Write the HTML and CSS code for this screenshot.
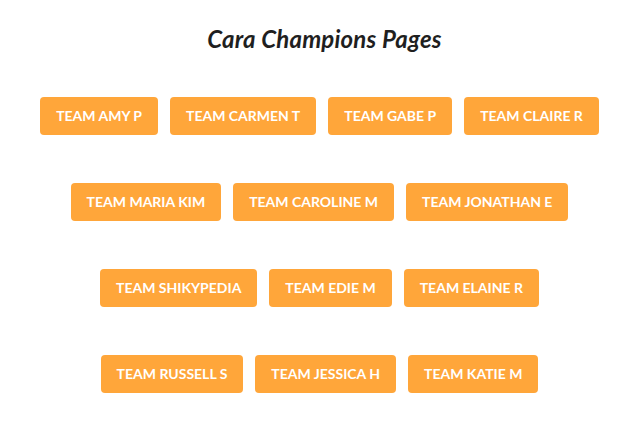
FILE: index.html
```html
<!DOCTYPE html>
<html lang="en">
<head>
  <meta charset="UTF-8" />
  <title>Cara Champions Pages</title>
  <link rel="stylesheet" href="styles.css">
</head>
<body>
  <div class="container">
    <h2>Cara Champions Pages</h2>
    <div class="team-row">
      <a class="team-btn" href="#">TEAM AMY P</a>
      <a class="team-btn" href="#">TEAM CARMEN T</a>
      <a class="team-btn" href="#">TEAM GABE P</a>
      <a class="team-btn" href="#">TEAM CLAIRE R</a>
    </div>
    <div class="team-row">
      <a class="team-btn" href="#">TEAM MARIA KIM</a>
      <a class="team-btn" href="#">TEAM CAROLINE M</a>
      <a class="team-btn" href="#">TEAM JONATHAN E</a>
    </div>
    <div class="team-row">
      <a class="team-btn" href="#">TEAM SHIKYPEDIA</a>
      <a class="team-btn" href="#">TEAM EDIE M</a>
      <a class="team-btn" href="#">TEAM ELAINE R</a>
    </div>
    <div class="team-row">
      <a class="team-btn" href="#">TEAM RUSSELL S</a>
      <a class="team-btn" href="#">TEAM JESSICA H</a>
      <a class="team-btn" href="#">TEAM KATIE M</a>
    </div>
  </div>
</body>
</html>
```

FILE: styles.css
```css
body {
  margin: 0;
  background: #ffffff;
  font-family: "Lato", "Noto Sans", sans-serif;
  color: #1f1f1f;
}

.container {
  padding: 24px 0 0;
  text-align: center;
}

h2 {
  margin: 0 0 43px;
  padding-left: 10px;
  font-size: 24px;
  font-style: italic;
  font-weight: 700;
  line-height: 30px;
  letter-spacing: 0.2px;
}

.team-row {
  display: flex;
  justify-content: center;
  gap: 12px;
  margin-bottom: 48px;
}

.team-btn {
  display: inline-block;
  height: 38px;
  line-height: 38px;
  padding: 0 16px;
  background: #ffa63a;
  color: #ffffff;
  border-radius: 4px;
  font-size: 14px;
  font-weight: 700;
  text-decoration: none;
}
```
